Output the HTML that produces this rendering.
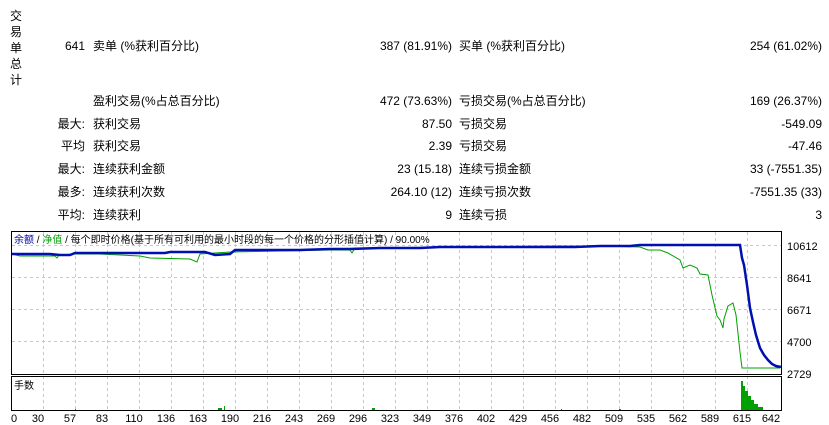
<!DOCTYPE html>
<html><head><meta charset="utf-8"><style>
body{margin:0;width:829px;height:425px;background:#fff;position:relative;overflow:hidden;font-family:"Liberation Sans","Noto Sans CJK SC",sans-serif;font-size:12px;color:#000}
.t{position:absolute;white-space:nowrap;line-height:14px}
.r{text-align:right}
</style></head><body>
<div class="t" style="left:10px;top:8px;width:14px;line-height:16px">交<br>易<br>单<br>总<br>计</div>
<div class="t r" style="right:744px;top:39px">641</div>
<div class="t" style="left:93px;top:39px">卖单 (%获利百分比)</div>
<div class="t r" style="right:377px;top:39px">387 (81.91%)</div>
<div class="t" style="left:459px;top:39px">买单 (%获利百分比)</div>
<div class="t r" style="right:7px;top:39px">254 (61.02%)</div>

<div class="t" style="left:93px;top:94px">盈利交易(%占总百分比)</div>
<div class="t r" style="right:377px;top:94px">472 (73.63%)</div>
<div class="t" style="left:459px;top:94px">亏损交易(%占总百分比)</div>
<div class="t r" style="right:7px;top:94px">169 (26.37%)</div>

<div class="t r" style="right:744px;top:117px">最大:</div>
<div class="t" style="left:93px;top:117px">获利交易</div>
<div class="t r" style="right:377px;top:117px">87.50</div>
<div class="t" style="left:459px;top:117px">亏损交易</div>
<div class="t r" style="right:7px;top:117px">-549.09</div>

<div class="t r" style="right:744px;top:139px">平均</div>
<div class="t" style="left:93px;top:139px">获利交易</div>
<div class="t r" style="right:377px;top:139px">2.39</div>
<div class="t" style="left:459px;top:139px">亏损交易</div>
<div class="t r" style="right:7px;top:139px">-47.46</div>

<div class="t r" style="right:744px;top:162px">最大:</div>
<div class="t" style="left:93px;top:162px">连续获利金额</div>
<div class="t r" style="right:377px;top:162px">23 (15.18)</div>
<div class="t" style="left:459px;top:162px">连续亏损金额</div>
<div class="t r" style="right:7px;top:162px">33 (-7551.35)</div>

<div class="t r" style="right:744px;top:185px">最多:</div>
<div class="t" style="left:93px;top:185px">连续获利次数</div>
<div class="t r" style="right:377px;top:185px">264.10 (12)</div>
<div class="t" style="left:459px;top:185px">连续亏损次数</div>
<div class="t r" style="right:7px;top:185px">-7551.35 (33)</div>

<div class="t r" style="right:744px;top:208px">平均:</div>
<div class="t" style="left:93px;top:208px">连续获利</div>
<div class="t r" style="right:377px;top:208px">9</div>
<div class="t" style="left:459px;top:208px">连续亏损</div>
<div class="t r" style="right:7px;top:208px">3</div>

<svg width="829" height="425" style="position:absolute;left:0;top:0" font-family="Liberation Sans, Noto Sans CJK SC, sans-serif" font-size="11">
<g stroke="#c8c8c8" stroke-dasharray="3,3" stroke-width="1">
<line x1="12" y1="245.5" x2="781" y2="245.5"/><line x1="12" y1="277.5" x2="781" y2="277.5"/><line x1="12" y1="309.5" x2="781" y2="309.5"/><line x1="12" y1="341.5" x2="781" y2="341.5"/>
<line x1="43.5" y1="232" x2="43.5" y2="410"/><line x1="75.5" y1="232" x2="75.5" y2="410"/><line x1="107.5" y1="232" x2="107.5" y2="410"/><line x1="139.5" y1="232" x2="139.5" y2="410"/><line x1="171.5" y1="232" x2="171.5" y2="410"/><line x1="203.5" y1="232" x2="203.5" y2="410"/><line x1="235.5" y1="232" x2="235.5" y2="410"/><line x1="267.5" y1="232" x2="267.5" y2="410"/><line x1="299.5" y1="232" x2="299.5" y2="410"/><line x1="331.5" y1="232" x2="331.5" y2="410"/><line x1="363.5" y1="232" x2="363.5" y2="410"/><line x1="395.5" y1="232" x2="395.5" y2="410"/><line x1="427.5" y1="232" x2="427.5" y2="410"/><line x1="459.5" y1="232" x2="459.5" y2="410"/><line x1="491.5" y1="232" x2="491.5" y2="410"/><line x1="523.5" y1="232" x2="523.5" y2="410"/><line x1="555.5" y1="232" x2="555.5" y2="410"/><line x1="587.5" y1="232" x2="587.5" y2="410"/><line x1="619.5" y1="232" x2="619.5" y2="410"/><line x1="651.5" y1="232" x2="651.5" y2="410"/><line x1="683.5" y1="232" x2="683.5" y2="410"/><line x1="715.5" y1="232" x2="715.5" y2="410"/><line x1="747.5" y1="232" x2="747.5" y2="410"/>
</g>
<polyline fill="none" stroke="#00a000" stroke-width="1" points="12,254 20,256 55,256 57,258 59,255 75,254 100,254 140,256 150,258 190,259 197,262 200,254 230,252 330,250 350,250 352,253 355,248 560,246 580,246 590,246 600,246 640,247 648,250 660,250 668,253 680,260 683,268 690,265 697,268 700,274 708,275 712,295 717,316 720,320 723,328 724,319 728,306 733,303 736,315 740,352 742,368 780,368"/>
<polyline fill="none" stroke="#0010b0" stroke-width="2.5" points="12,254 50,254 60,255 70,255 75,253 160,253 165,253 170,252 205,252 215,255 230,254 235,250 300,250 330,249 350,249 380,248 400,248 420,248 440,247 555,247 575,247 600,246 630,246 640,245 740,245 742,258 744,265 747,285 750,308 753,322 756,335 760,348 764,355 768,360 772,364 776,366 781,367"/>
<g fill="#00a000">
<rect x="75" y="409" width="1" height="1"/><rect x="218" y="408" width="4" height="2"/><rect x="224" y="406" width="1" height="4"/><rect x="372" y="408" width="3" height="2"/><rect x="561" y="409" width="1" height="1"/><rect x="619" y="409" width="2" height="1"/>
<polygon points="741,410 741,381 743,381 743,386 745,386 745,391 748,391 748,396 751,396 751,400 754,400 754,404 758,404 758,407 763,407 763,410"/>
</g>
<rect x="11.5" y="231.5" width="770" height="143" fill="none" stroke="#000"/>
<rect x="11.5" y="376.5" width="770" height="34" fill="none" stroke="#000"/>
<text x="14" y="243" font-size="10"><tspan fill="#0000a0">余额</tspan> / <tspan fill="#00a000">净值</tspan> / 每个即时价格(基于所有可利用的最小时段的每一个价格的分形插值计算) / 90.00%</text>
<text x="14" y="389" font-size="10">手数</text>
<g font-size="11">
<text x="787" y="250">10612</text><text x="787" y="282">8641</text><text x="787" y="314">6671</text><text x="787" y="346">4700</text><text x="787" y="378">2729</text>
</g>
<g font-size="11" text-anchor="middle">
<text x="14" y="422">0</text><text x="38" y="422">30</text><text x="70" y="422">57</text><text x="102" y="422">83</text><text x="134" y="422">110</text><text x="166" y="422">136</text><text x="198" y="422">163</text><text x="230" y="422">190</text><text x="262" y="422">216</text><text x="294" y="422">243</text><text x="326" y="422">269</text><text x="358" y="422">296</text><text x="390" y="422">323</text><text x="422" y="422">349</text><text x="454" y="422">376</text><text x="486" y="422">402</text><text x="518" y="422">429</text><text x="550" y="422">456</text><text x="582" y="422">482</text><text x="614" y="422">509</text><text x="646" y="422">535</text><text x="678" y="422">562</text><text x="710" y="422">589</text><text x="742" y="422">615</text><text x="771" y="422">642</text>
</g>
</svg>
</body></html>
